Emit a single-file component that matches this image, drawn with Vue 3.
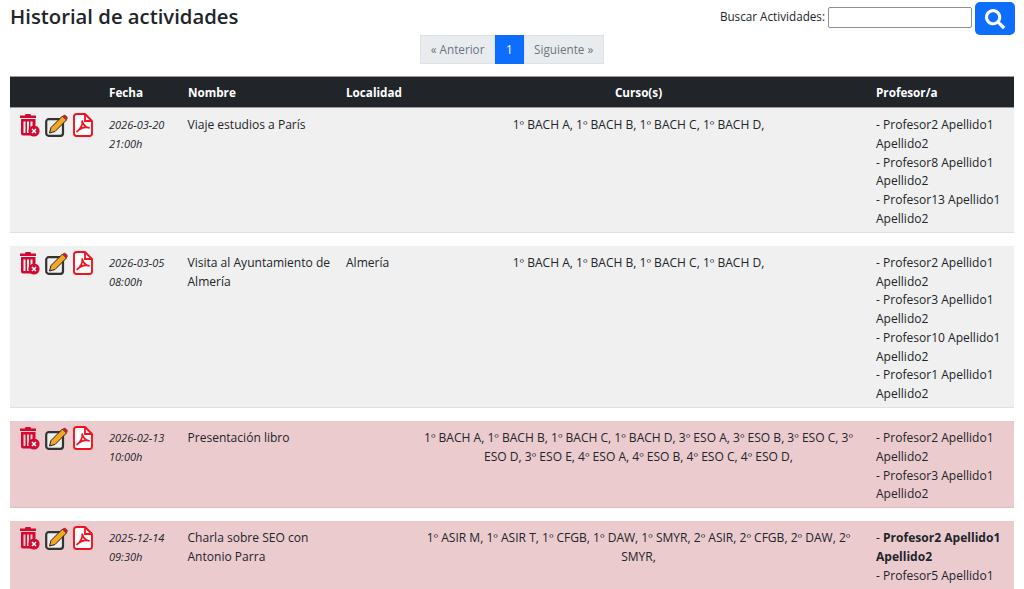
<script setup>
const rows = [
  { d: '2026-03-20', t: '21:00h', n: 'Viaje estudios a París', l: '', c: '1º BACH A, 1º BACH B, 1º BACH C, 1º BACH D,', p: ['Profesor2 Apellido1 Apellido2', 'Profesor8 Apellido1 Apellido2', 'Profesor13 Apellido1 Apellido2'], red: false },
  { d: '2026-03-05', t: '08:00h', n: 'Visita al Ayuntamiento de Almería', l: 'Almería', c: '1º BACH A, 1º BACH B, 1º BACH C, 1º BACH D,', p: ['Profesor2 Apellido1 Apellido2', 'Profesor3 Apellido1 Apellido2', 'Profesor10 Apellido1 Apellido2', 'Profesor1 Apellido1 Apellido2'], red: false },
  { d: '2026-02-13', t: '10:00h', n: 'Presentación libro', l: '', c: '1º BACH A, 1º BACH B, 1º BACH C, 1º BACH D, 3º ESO A, 3º ESO B, 3º ESO C, 3º ESO D, 3º ESO E, 4º ESO A, 4º ESO B, 4º ESO C, 4º ESO D,', p: ['Profesor2 Apellido1 Apellido2', 'Profesor3 Apellido1 Apellido2'], red: true },
  { d: '2025-12-14', t: '09:30h', n: 'Charla sobre SEO con Antonio Parra', l: '', c: '1º ASIR M, 1º ASIR T, 1º CFGB, 1º DAW, 1º SMYR, 2º ASIR, 2º CFGB, 2º DAW, 2º SMYR,', p: ['Profesor5 Apellido1 Apellido2'], me: 'Profesor2 Apellido1 Apellido2', red: true },
]
</script>

<template>
  <div class="page">
    <div class="top">
      <h1 class="title">Historial de actividades</h1>
      <form class="search" @submit.prevent>
        <label class="label" for="q">Buscar Actividades:</label>
        <input id="q" class="input" type="text" />
        <button class="btn" type="button" aria-label="Buscar">
          <svg width="20" height="20" viewBox="0 0 512 512"><path fill="#fff" d="M505 442.700L405.300 343c-4.500-4.500-10.600-7-17-7H372c27.600-35.300 44-79.700 44-128C416 93.100 322.900 0 208 0S0 93.100 0 208s93.100 208 208 208c48.300 0 92.700-16.400 128-44v16.300c0 6.400 2.500 12.500 7 17l99.700 99.700c9.400 9.400 24.600 9.400 33.900 0l28.300-28.300c9.400-9.400 9.400-24.600.1-34zM208 336c-70.700 0-128-57.200-128-128 0-70.700 57.200-128 128-128 70.700 0 128 57.200 128 128 0 70.700-57.200 128-128 128z"/></svg>
        </button>
      </form>
    </div>

    <nav class="pager">
      <span class="pg">« Anterior</span>
      <span class="pg current">1</span>
      <span class="pg">Siguiente »</span>
    </nav>

    <div class="grid head">
      <div></div>
      <div>Fecha</div>
      <div>Nombre</div>
      <div>Localidad</div>
      <div class="center">Curso(s)</div>
      <div>Profesor/a</div>
    </div>

    <div v-for="r in rows" :key="r.d" class="grid row" :class="{ red: r.red }">
      <div class="icons">
        <svg width="20" height="24" viewBox="0 0 20 24">
          <path fill="#d10a32" d="M5.500 1h5l.5 1.500h5V5H0V2.500h5zM1 6h14.500v6.600a6.500 6.500 0 0 0-3 1.700V8.500h-2V19c0 1.300.3 2.200.8 3.500H3a2 2 0 0 1-2-2zm2.500 2.500V20h2V8.500zm3.500 0V20h2V8.500z"/>
          <circle cx="14" cy="18" r="5.600" fill="#d10a32"/>
          <path stroke="#fff" stroke-width="1.500" d="M12 16l4 4M16 16l-4 4"/>
        </svg>
        <svg width="23" height="24" viewBox="0 0 23 24">
          <rect x="1.200" y="6.200" width="16.800" height="16.600" rx="2.500" fill="#eee" stroke="#333" stroke-width="2.200"/>
          <path fill="#f5a623" stroke="#222" stroke-width="1" stroke-linejoin="round" d="M17.500 3l4 4L10 18.500l-5.500 1.500 1.500-5.500z"/>
          <path fill="#b5282c" d="M18 2.500c1-1 2-1 3 0l1 1c1 1 1 2 0 3l-.8.800-4-4z"/>
        </svg>
        <svg width="20" height="24" viewBox="0 0 20 24">
          <path fill="#fff" stroke="#f4111f" stroke-width="1.900" stroke-linejoin="round" d="M3.500 1H12l7 7v12.500a2.500 2.500 0 0 1-2.500 2.500h-13A2.500 2.500 0 0 1 1 20.500v-17A2.500 2.500 0 0 1 3.500 1z"/>
          <path fill="none" stroke="#f4111f" stroke-width="1.800" d="M12 1v7h7"/>
          <path fill="none" stroke="#f4111f" stroke-width="1.700" stroke-linejoin="round" d="M9.200 8c.4 3.500-1.800 8-5.200 10.500 3-3 8-4.700 12-3.700-3-.6-6-3.300-6.800-6.800z"/>
        </svg>
      </div>
      <div class="date"><div>{{ r.d }}</div><div>{{ r.t }}</div></div>
      <div class="name">{{ r.n }}</div>
      <div>{{ r.l }}</div>
      <div class="center">{{ r.c }}</div>
      <div class="prof">
        <div v-if="r.me">- <b>{{ r.me }}</b></div>
        <div v-for="x in r.p" :key="x">- {{ x }}</div>
      </div>
    </div>
  </div>
</template>

<style>
html, body { margin: 0; overflow: hidden; background: #fff; }
</style>

<style scoped>
.page {
  padding: 0 10px;
  font-family: "Open Sans", "Noto Sans", sans-serif;
  font-size: 12.05px;
  line-height: 18.75px;
  color: #212529;
}
.top { display: flex; justify-content: space-between; align-items: flex-start; height: 35px; }
.title { margin: 3px 0 0; font-size: 20.300px; line-height: 26px; font-weight: 600; }
.search { display: flex; align-items: flex-start; padding-top: 2px; margin-right: -1px; }
.label { margin-top: 5px; margin-right: 3px; font-size: 11.7px; }
.input { width: 144px; height: 21px; box-sizing: border-box; margin-top: 5px; border: 1px solid #8f8f8f; border-radius: 2px; padding: 0; }
.btn { width: 40px; height: 33px; margin-left: 3px; padding: 0; display: flex; align-items: center; justify-content: center; background: #0d6efd; border: 0; border-radius: 5px; }
.pager { display: flex; justify-content: center; height: 29px; margin-bottom: 12px; font-size: 11.7px; }
.pg { display: flex; align-items: center; padding: 0 9.500px; background: #e9ecef; color: #6c757d; border: 1px solid #dee2e6; }
.pg.current { background: #0d6efd; border-color: #0d6efd; color: #fff; padding: 0 10px; }
.grid { display: grid; grid-template-columns: 89px 79px 158px 75px 455px 148px; }
.grid > div { padding: 8px 10px 3.250px; min-width: 0; }
.head { background: #212529; color: #fff; font-weight: 700; font-size: 11.7px; border-top: 1px solid #999; border-bottom: 1px solid #999; height: 32px; box-sizing: border-box; }
.grid.head > div { line-height: 18px; padding-top: 6px; }
.row { background: #f0f0f0; border-bottom: 1px solid #dee2e6; margin-bottom: 13px; }
.row.red { background: #eccbcf; border-bottom-color: #dcbcc0; }
.center { text-align: center; }
.date { font-style: italic; font-size: 11px; }
.grid > .name { padding-right: 2px; margin-left: -0.5px; }
.grid > .prof { padding-right: 4px; }
.grid > .icons { display: flex; align-items: flex-start; gap: 5px; padding: 5px 0 0 10px; }
svg { display: block; flex: none; }
</style>
